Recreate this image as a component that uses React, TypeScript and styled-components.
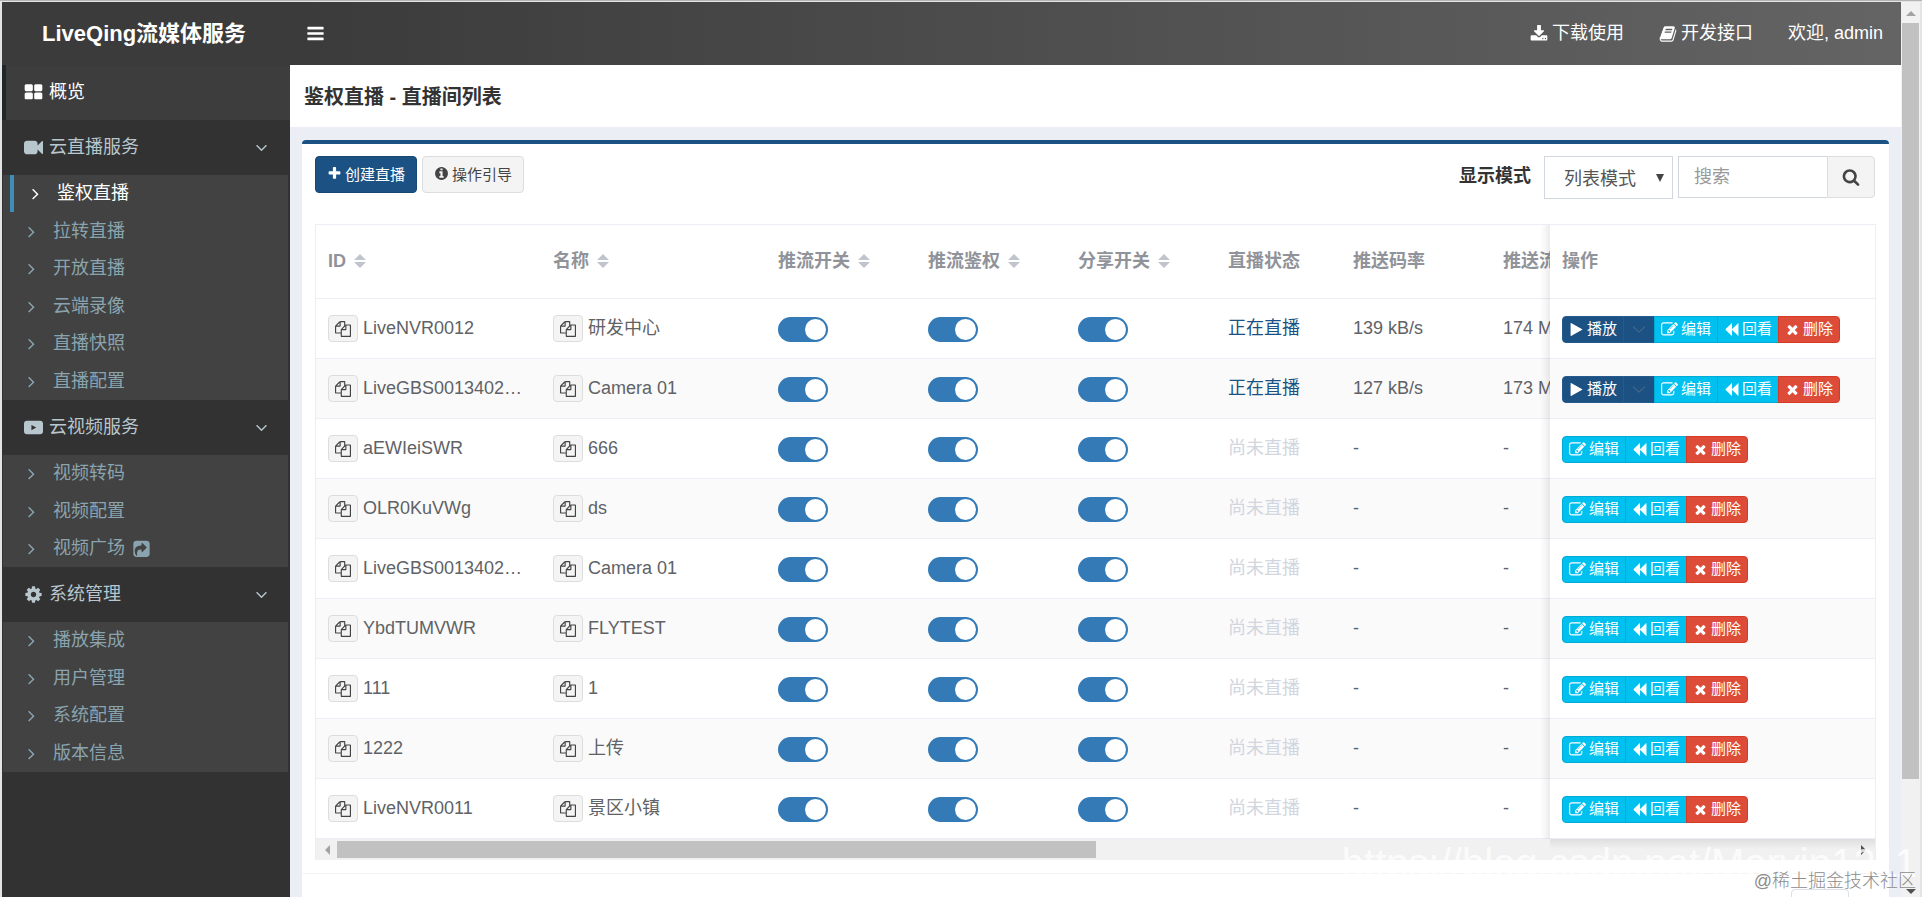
import { useState } from "react"
import { createGlobalStyle, styled } from "styled-components"

const GlobalStyle = createGlobalStyle`
    * {
        box-sizing: border-box;
    }

    html {
        overflow: hidden;
    }

    body {
        margin: 0;
        background: #e4e4e4;
        color: #333;
        font-family: "Liberation Sans", "Noto Sans CJK SC", sans-serif;
        font-size: 18px;
        line-height: 25px;
    }

    button, input, select {
        font-family: inherit;
        margin: 0;
    }

    ul {
        list-style: none;
        margin: 0;
        padding: 0;
    }
`

const icons = {
    grid: "M832 1024v384q0 52-38 90t-90 38h-512q-52 0-90-38t-38-90v-384q0-52 38-90t90-38h512q52 0 90 38t38 90zm0-768v384q0 52-38 90t-90 38h-512q-52 0-90-38t-38-90v-384q0-52 38-90t90-38h512q52 0 90 38t38 90zm896 768v384q0 52-38 90t-90 38h-512q-52 0-90-38t-38-90v-384q0-52 38-90t90-38h512q52 0 90 38t38 90zm0-768v384q0 52-38 90t-90 38h-512q-52 0-90-38t-38-90v-384q0-52 38-90t90-38h512q52 0 90 38t38 90z",
    camera: "M1792 352v1088q0 42-39 59-13 5-25 5-27 0-45-19l-403-403v166q0 119-84.5 203.5t-203.5 84.5h-704q-119 0-203.5-84.5t-84.5-203.5v-704q0-119 84.5-203.5t203.5-84.5h704q119 0 203.5 84.5t84.5 203.5v165l403-402q18-19 45-19 12 0 25 5 39 17 39 59z",
    video: "M288 256h1216q288 0 288 288v704q0 288-288 288h-1216q-288 0-288-288v-704q0-288 288-288zM700 650v500l450-250z",
    cog: "M1152 896q0-106-75-181t-181-75-181 75-75 181 75 181 181 75 181-75 75-181zm512-109v222q0 12-8 23t-20 13l-185 28q-19 54-39 91 35 50 107 138 10 12 10 25t-9 23q-27 37-99 108t-94 71q-12 0-26-9l-138-108q-44 23-91 38-16 136-29 186-7 28-36 28h-222q-14 0-24.5-8.5t-11.5-21.5l-28-184q-49-16-90-37l-141 107q-10 9-25 9-14 0-25-11-126-114-165-168-7-10-7-23 0-12 8-23 15-21 51-66.5t54-70.5q-27-50-41-99l-183-27q-13-2-21-12.5t-8-23.5v-222q0-12 8-23t19-13l186-28q14-46 39-92-40-57-107-138-10-12-10-24 0-10 9-23 26-36 98.5-107.5t94.5-71.5q13 0 26 10l138 107q44-23 91-38 16-136 29-186 7-28 36-28h222q14 0 24.5 8.5t11.5 21.5l28 184q49 16 90 37l142-107q9-9 24-9 13 0 25 10 129 119 165 170 7 8 7 22 0 12-8 23-15 21-51 66.5t-54 70.5q26 50 41 98l183 28q13 2 21 12.5t8 23.5z",
    share: "M1005 1197l352-352q19-19 19-45t-19-45l-352-352q-30-31-69-14-40 17-40 59v160q-119 0-216 19.5t-162.5 51-114 79-76.5 95.5-44.5 109-21.5 111.5-5 110.5q0 181 167 404 10 12 25 12 7 0 13-3 22-9 19-33-44-354 62-473 46-52 130-75.5t224-23.5v160q0 42 40 59 12 5 24 5 26 0 45-19zm659-749v960q0 119-84.5 203.5t-203.5 84.5h-960q-119 0-203.5-84.5t-84.5-203.5v-960q0-119 84.5-203.5t203.5-84.5h960q119 0 203.5 84.5t84.5 203.5z",
    download: "M1344 1344q0-26-19-45t-45-19-45 19-19 45 19 45 45 19 45-19 19-45zm256 0q0-26-19-45t-45-19-45 19-19 45 19 45 45 19 45-19 19-45zm128-224v320q0 40-28 68t-68 28h-1472q-40 0-68-28t-28-68v-320q0-40 28-68t68-28h465l135 136q58 56 136 56t136-56l136-136h464q40 0 68 28t28 68zm-325-569q17 41-14 70l-448 448q-18 19-45 19t-45-19l-448-448q-31-29-14-70 17-39 59-39h256v-448q0-26 19-45t45-19h256q26 0 45 19t19 45v448h256q42 0 59 39z",
    book: "M1703 478q40 57 18 129l-275 906q-19 64-76.5 107.5t-122.5 43.5h-923q-77 0-148.5-53.5t-99.5-131.5q-24-67-2-127 0-4 3-27t4-37q1-8-3-21.5t-3-19.5q2-11 8-21t16.5-23.5 16.5-23.5q23-38 45-91.5t30-91.5q3-10 .5-30t-.5-28q3-11 17-28t17-23q21-36 42-92t25-90q1-9-2.5-32t.5-28q4-13 22-30.5t22-22.5q19-26 42.5-84.5t27.5-96.5q1-8-3-25.5t-2-26.5q2-8 9-18t18-23 17-21q8-12 16.5-30.5t15-35 16-36 19.5-32 26.5-23.5 36-11.5 47.5 5.5l-1 3q38-9 51-9h761q74 0 114 56t18 130l-274 906q-36 119-71.5 153.5t-128.5 34.5h-869q-27 0-38 15-11 16-1 43 24 70 144 70h923q29 0 56-15.5t35-41.5l300-987q7-22 5-57 38 15 59 43zm-1064 2q-4 13 2 22.5t20 9.5h608q13 0 25.5-9.5t16.5-22.5l21-64q4-13-2-22.5t-20-9.5h-608q-13 0-25.5 9.5t-16.5 22.5zm-83 256q-4 13 2 22.5t20 9.5h608q13 0 25.5-9.5t16.5-22.5l21-64q4-13-2-22.5t-20-9.5h-608q-13 0-25.5 9.5t-16.5 22.5z",
    bars: "M1664 1344v128q0 26-19 45t-45 19h-1408q-26 0-45-19t-19-45v-128q0-26 19-45t45-19h1408q26 0 45 19t19 45zm0-512v128q0 26-19 45t-45 19h-1408q-26 0-45-19t-19-45v-128q0-26 19-45t45-19h1408q26 0 45 19t19 45zm0-512v128q0 26-19 45t-45 19h-1408q-26 0-45-19t-19-45v-128q0-26 19-45t45-19h1408q26 0 45 19t19 45z",
    plus: "M1600 736v192q0 40-28 68t-68 28h-416v416q0 40-28 68t-68 28h-192q-40 0-68-28t-28-68v-416h-416q-40 0-68-28t-28-68v-192q0-40 28-68t68-28h416v-416q0-40 28-68t68-28h192q40 0 68 28t28 68v416h416q40 0 68 28t28 68z",
    info: "M1152 1376v-160q0-14-9-23t-23-9h-96v-512q0-14-9-23t-23-9h-320q-14 0-23 9t-9 23v160q0 14 9 23t23 9h96v320h-96q-14 0-23 9t-9 23v160q0 14 9 23t23 9h448q14 0 23-9t9-23zm-128-896v-160q0-14-9-23t-23-9h-192q-14 0-23 9t-9 23v160q0 14 9 23t23 9h192q14 0 23-9t9-23zm640 416q0 209-103 385.5t-279.5 279.5-385.5 103-385.5-103-279.5-279.5-103-385.5 103-385.5 279.5-279.5 385.5-103 385.5 103 279.5 279.5 103 385.5z",
    search: "M1216 832q0-185-131.5-316.5t-316.5-131.5-316.5 131.5-131.5 316.5 131.5 316.5 316.5 131.5 316.5-131.5 131.5-316.5zm512 832q0 52-38 90t-90 38q-54 0-90-38l-343-342q-179 124-399 124-143 0-273.5-55.5t-225-150-150-225-55.5-273.5 55.5-273.5 150-225 225-150 273.5-55.5 273.5 55.5 225 150 150 225 55.5 273.5q0 220-124 399l343 343q37 37 37 90z",
    copy: "M1696 384q40 0 68 28t28 68v1216q0 40-28 68t-68 28h-960q-40 0-68-28t-28-68v-288h-544q-40 0-68-28t-28-68v-672q0-40 20-88t48-76l408-408q28-28 76-48t88-20h416q40 0 68 28t28 68v328q68-40 128-40h416zm-544 213l-299 299h299v-299zm-640-384l-299 299h299v-299zm196 647l316-316v-416h-384v416q0 40-28 68t-68 28h-416v640h512v-256q0-40 20-88t48-76zm956 804v-1152h-384v416q0 40-28 68t-68 28h-416v640h896z",
    edit: "M888 1184l116-116-152-152-116 116v56h96v96h56zm440-720q-16-16-33 1l-350 350q-17 17-1 33t33-1l350-350q17-17 1-33zm80 594v190q0 119-84.5 203.5t-203.5 84.5h-832q-119 0-203.5-84.5t-84.5-203.5v-832q0-119 84.5-203.5t203.5-84.5h832q63 0 117 25 15 7 18 23 3 17-9 29l-49 49q-14 14-32 8-23-6-45-6h-832q-66 0-113 47t-47 113v832q0 66 47 113t113 47h832q66 0 113-47t47-113v-126q0-13 9-22l64-64q15-15 35-7t20 29zm-96-738l288 288-672 672h-288v-288zm444 132l-92 92-288-288 92-92q28-28 68-28t68 28l152 152q28 28 28 68t-28 68z",
    play: "M1576 927l-1328 738q-23 13-39.5 3t-16.5-36v-1472q0-26 16.5-36t39.5 3l1328 738q23 13 23 31t-23 31z",
    backward: "M1683 141q19-19 32-13t13 32v1472q0 26-13 32t-32-13l-710-710q-9-9-13-19v710q0 26-13 32t-32-13l-710-710q-19-19-19-45t19-45l710-710q19-19 32-13t13 32v710q4-10 13-19z",
    times: "M1490 1322q0 40-28 68l-136 136q-28 28-68 28t-68-28l-294-294-294 294q-28 28-68 28t-68-28l-136-136q-28-28-28-68t28-68l294-294-294-294q-28-28-28-68t28-68l136-136q28-28 68-28t68 28l294 294 294-294q28-28 68-28t68 28l136 136q28 28 28 68t-28 68l-294 294 294 294q28 28 28 68z",
    down: "M1395 736q0 13-10 23l-466 466q-10 10-23 10t-23-10l-466-466q-10-10-10-23t10-23l50-50q10-10 23-10t23 10l393 393 393-393q10-10 23-10t23 10l50 50q10 10 10 23z",
    right: "M1171 960q0 13-10 23l-466 466q-10 10-23 10t-23-10l-50-50q-10-10-10-23t10-23l393-393-393-393q-10-10-10-23t10-23l50-50q10-10 23-10t23 10l466 466q10 10 10 23z",
    thinDown: "M100 640l796 740 796-740-80-90-716 670-716-670z",
}

type iconProp = {
    name: keyof typeof icons
    size?: number
}

const Icon = ({ name, size = 18 }: iconProp) => (
    <IconSvg viewBox="0 0 1792 1792" width={size} height={size} aria-hidden="true">
        <path d={icons[name]} fillRule="evenodd" />
    </IconSvg>
)

type menuGroup = {
    title: string
    icon: keyof typeof icons
    items: string[]
}

const menu: menuGroup[] = [
    { title: "云直播服务", icon: "camera", items: ["鉴权直播", "拉转直播", "开放直播", "云端录像", "直播快照", "直播配置"] },
    { title: "云视频服务", icon: "video", items: ["视频转码", "视频配置", "视频广场"] },
    { title: "系统管理", icon: "cog", items: ["播放集成", "用户管理", "系统配置", "版本信息"] },
]

type room = {
    id: string
    name: string
    rate?: string
    total?: string
}

const rooms: room[] = [
    { id: "LiveNVR0012", name: "研发中心", rate: "139 kB/s", total: "174 MB" },
    { id: "LiveGBS0013402000000", name: "Camera 01", rate: "127 kB/s", total: "173 MB" },
    { id: "aEWIeiSWR", name: "666" },
    { id: "OLR0KuVWg", name: "ds" },
    { id: "LiveGBS0013402000001", name: "Camera 01" },
    { id: "YbdTUMVWR", name: "FLYTEST" },
    { id: "111", name: "1" },
    { id: "1222", name: "上传" },
    { id: "LiveNVR0011", name: "景区小镇" },
]

const columns = [
    { title: "ID", width: 225, sort: true },
    { title: "名称", width: 225, sort: true },
    { title: "推流开关", width: 150, sort: true },
    { title: "推流鉴权", width: 150, sort: true },
    { title: "分享开关", width: 150, sort: true },
    { title: "直播状态", width: 125, sort: false },
    { title: "推送码率", width: 150, sort: false },
    { title: "推送流量", width: 150, sort: false },
    { title: "操作", width: 325, sort: false },
]

const switches = ["推流开关", "推流鉴权", "分享开关"]

const Sidebar = () => {
    const [active, setActive] = useState("鉴权直播")

    return (
        <SidebarContainer>
            <OverviewLink href="#overview">
                <Icon name="grid" size={19} />
                概览
            </OverviewLink>
            {menu.map((group) => (
                <div key={group.title}>
                    <GroupLink href="#group">
                        <Icon name={group.icon} size={19} />
                        <span>{group.title}</span>
                        <Icon name="down" size={19} />
                    </GroupLink>
                    <SubMenu>
                        {group.items.map((item) => (
                            <SubItem key={item}>
                                <SubLink href="#item" $active={item === active} onClick={() => setActive(item)}>
                                    <Icon name="right" size={19} />
                                    <span>{item}</span>
                                    {item === "视频广场" && <Icon name="share" size={19} />}
                                </SubLink>
                            </SubItem>
                        ))}
                    </SubMenu>
                </div>
            ))}
        </SidebarContainer>
    )
}

const RoomRow = ({ id, name, rate, total }: room) => (
    <tr>
        {[id, name].map((text, i) => (
            <td key={i}>
                <CopyCell>
                    <CopyButton type="button" aria-label="复制">
                        <Icon name="copy" size={16} />
                    </CopyButton>
                    <span>{text}</span>
                </CopyCell>
            </td>
        ))}
        {switches.map((label) => (
            <td key={label}>
                <Toggle type="checkbox" role="switch" aria-label={label} defaultChecked />
            </td>
        ))}
        <td><Status $live={!!rate}>{rate ? "正在直播" : "尚未直播"}</Status></td>
        <td>{rate || "-"}</td>
        <td>{total || "-"}</td>
        <FixedCell>
            <Actions>
                {rate && (
                    <>
                        <ActionButton type="button" $kind="primary"><Icon name="play" size={15} />播放</ActionButton>
                        <MoreButton type="button" $kind="primary" aria-label="更多"><Icon name="thinDown" size={14} /></MoreButton>
                    </>
                )}
                <ActionButton type="button" $kind="info"><Icon name="edit" size={17} />编辑</ActionButton>
                <ActionButton type="button" $kind="info"><Icon name="backward" size={15} />回看</ActionButton>
                <ActionButton type="button" $kind="danger"><Icon name="times" size={15} />删除</ActionButton>
            </Actions>
        </FixedCell>
    </tr>
)

const App = () => {
    return (
        <Window>
            <GlobalStyle />
            <Page>
                <Header>
                    <Logo href="#home">LiveQing流媒体服务</Logo>
                    <MenuButton type="button" aria-label="菜单"><Icon name="bars" size={19} /></MenuButton>
                    <HeaderNav>
                        <a href="#download"><Icon name="download" />下载使用</a>
                        <a href="#api"><Icon name="book" />开发接口</a>
                        <a href="#user">欢迎, admin</a>
                    </HeaderNav>
                </Header>
                <Body>
                    <Sidebar />
                    <Content>
                        <TitleBar>
                            <h1>鉴权直播 - 直播间列表</h1>
                        </TitleBar>
                        <Box>
                            <Toolbar>
                                <ToolButton type="button" $primary><Icon name="plus" size={15} />创建直播</ToolButton>
                                <ToolButton type="button"><Icon name="info" size={15} />操作引导</ToolButton>
                                <Filters>
                                    <label htmlFor="mode">显示模式</label>
                                    <SelectWrap>
                                        <ModeSelect id="mode">
                                            <option>列表模式</option>
                                            <option>视图模式</option>
                                        </ModeSelect>
                                    </SelectWrap>
                                    <SearchInput type="text" placeholder="搜索" aria-label="搜索" />
                                    <SearchButton type="button" aria-label="查询"><Icon name="search" /></SearchButton>
                                </Filters>
                            </Toolbar>
                            <TableFrame>
                                <TableScroll>
                                    <Table>
                                        <colgroup>
                                            {columns.map((col) => <col key={col.title} width={col.width} />)}
                                        </colgroup>
                                        <thead>
                                            <tr>
                                                {columns.map((col) => (
                                                    <HeadCell key={col.title} $fixed={col.title === "操作"}>
                                                        {col.title}
                                                        {col.sort && (
                                                            <SortIcon viewBox="0 0 12 14" aria-hidden="true">
                                                                <path d="M6 0L12 6H0zM0 8H12L6 14z" />
                                                            </SortIcon>
                                                        )}
                                                    </HeadCell>
                                                ))}
                                            </tr>
                                        </thead>
                                        <tbody>
                                            {rooms.map((item) => <RoomRow key={item.id} {...item} />)}
                                        </tbody>
                                    </Table>
                                </TableScroll>
                                <ScrollBarX>
                                    <Arrow viewBox="0 0 10 10"><path d="M8 0V10L3 5z" /></Arrow>
                                    <TrackX><ThumbX /></TrackX>
                                    <Arrow viewBox="0 0 10 10" $dark><path d="M2 0V10L7 5z" /></Arrow>
                                </ScrollBarX>
                            </TableFrame>
                            <BoxFooter>
                                <PageSize type="button" aria-label="分页" />
                            </BoxFooter>
                        </Box>
                    </Content>
                </Body>
            </Page>
            <ScrollBarY>
                <Arrow viewBox="0 0 10 10"><path d="M0 8H10L5 3z" /></Arrow>
                <TrackY><ThumbY /></TrackY>
                <Arrow viewBox="0 0 10 10" $dark><path d="M0 2H10L5 7z" /></Arrow>
            </ScrollBarY>
            <BlogMark>https://blog.csdn.net/Mervin1211</BlogMark>
            <SiteMark>@稀土掘金技术社区</SiteMark>
        </Window>
    )
}

const IconSvg = styled.svg`
    fill: currentColor;
    flex: none;
    display: block;
`

const Window = styled.div`
    position: relative;
    display: flex;
    height: 100vh;
    overflow: hidden;
    padding: 1px 2px 0;
    border-top: 1px solid #b4b4b4;
`

const Page = styled.div`
    display: flex;
    flex-direction: column;
    flex: 1;
    min-width: 0;
`

const Header = styled.header`
    display: flex;
    align-items: center;
    flex: none;
    height: 63px;
    background: linear-gradient(90deg, #3b3b3b 16%, #646464);
    color: #fff;
`

const Logo = styled.a`
    width: 288px;
    padding-left: 40px;
    color: #fff;
    font-size: 22px;
    font-weight: bold;
    line-height: 30px;
    text-decoration: none;
`

const MenuButton = styled.button`
    padding: 16px;
    border: 0;
    background: none;
    color: #fff;
`

const HeaderNav = styled.nav`
    display: flex;
    gap: 35px;
    margin-left: auto;
    padding-right: 18px;

    a {
        display: flex;
        align-items: center;
        gap: 4px;
        color: #fff;
        text-decoration: none;
    }
`

const Body = styled.div`
    display: flex;
    flex: 1;
    min-height: 0;
`

const SidebarContainer = styled.aside`
    width: 288px;
    flex: none;
    background: #323232;
`

const OverviewLink = styled.a`
    display: flex;
    align-items: center;
    gap: 6px;
    height: 55px;
    padding-left: 18px;
    border-left: 4px solid #1e282c;
    background: #3d3d3d;
    color: #fff;
    text-decoration: none;
`

const GroupLink = styled.a`
    display: flex;
    align-items: center;
    gap: 6px;
    height: 55px;
    padding: 0 19px 0 22px;
    color: #b8c7ce;
    text-decoration: none;

    span {
        flex: 1;
    }
`

const SubMenu = styled.ul`
    margin: 0 2px 0 1px;
    padding-left: 7px;
    background: #424242;
`

const SubItem = styled.li`
    height: 37px;

    &:nth-child(even) {
        height: 38px;
    }
`

const SubLink = styled.a<{ $active: boolean }>`
    display: flex;
    align-items: center;
    height: 100%;
    padding-left: 12px;
    border-left: ${({ $active }) => ($active ? "4px solid #3c8dbc" : "0")};
    color: ${({ $active }) => ($active ? "#fff" : "#8aa4af")};
    text-decoration: none;

    span {
        margin: 0 7px 0 12px;
    }
`

const Content = styled.main`
    display: flex;
    flex-direction: column;
    flex: 1;
    min-width: 0;
    background: #ebeef4;
`

const TitleBar = styled.div`
    flex: none;
    padding: 19px 14px 17px;
    background: #fff;

    h1 {
        margin: 0;
        font-size: 20px;
        line-height: 26px;
    }
`

const Box = styled.section`
    flex: none;
    margin: 13px 12px 0;
    border-top: 4px solid #1b5283;
    border-radius: 4px;
    background: #fff;
    box-shadow: 0 1px 1px rgba(0, 0, 0, 0.1);
`

const Toolbar = styled.div`
    display: flex;
    align-items: flex-start;
    gap: 5px;
    padding: 12px 14px 25px 13px;
`

const ToolButton = styled.button<{ $primary?: boolean }>`
    display: flex;
    align-items: center;
    gap: 3px;
    height: 37px;
    padding: 0 11px 2px;
    border: 1px solid ${({ $primary }) => ($primary ? "#18476f" : "#ddd")};
    border-radius: 4px;
    background: ${({ $primary }) => ($primary ? "#1b5283" : "#f4f4f4")};
    color: ${({ $primary }) => ($primary ? "#fff" : "#444")};
    font-size: 15px;
`

const Filters = styled.div`
    display: flex;
    align-items: flex-start;
    margin-left: auto;

    label {
        padding: 8px 13px 0 0;
        font-weight: bold;
    }
`

const SelectWrap = styled.div`
    position: relative;
    margin-right: 5px;

    &::after {
        content: "";
        position: absolute;
        right: 9px;
        top: 18px;
        border: 4px solid transparent;
        border-top: 8px solid #444;
        border-bottom: 0;
        pointer-events: none;
    }
`

const ModeSelect = styled.select`
    appearance: none;
    width: 129px;
    height: 43px;
    padding: 2px 0 0 19px;
    border: 1px solid #d2d6de;
    border-radius: 0;
    background: #fff;
    color: #555;
    font-size: 18px;
`

const SearchInput = styled.input`
    width: 149px;
    height: 42px;
    padding: 0 15px;
    border: 1px solid #d2d6de;
    border-right: 0;
    font-size: 18px;

    &::placeholder {
        color: #999;
    }
`

const SearchButton = styled.button`
    display: flex;
    align-items: center;
    justify-content: center;
    width: 48px;
    height: 42px;
    padding: 0;
    border: 1px solid #ddd;
    border-radius: 0 4px 4px 0;
    background: #f4f4f4;
    color: #444;
`

const TableFrame = styled.div`
    margin: 0 13px;
    border: 1px solid #ebeef5;
    border-bottom: 0;
    color: #606266;
`

const TableScroll = styled.div`
    overflow: hidden;
`

const Table = styled.table`
    width: 1650px;
    min-width: 100%;
    table-layout: fixed;
    border-spacing: 0;

    td, th {
        padding: 0 12px;
        border-bottom: 1px solid #ebeef5;
        background: #fff;
        text-align: left;
        white-space: nowrap;
    }

    td {
        height: 60px;
    }

    tr:nth-child(even) td {
        background: #fafafa;
    }
`

const fixedStyle = `
    position: sticky;
    right: 0;
    z-index: 1;

    &::before {
        content: "";
        position: absolute;
        left: -10px;
        top: 0;
        bottom: -1px;
        width: 10px;
        background: linear-gradient(90deg, transparent, rgba(0, 0, 0, 0.03) 50%, rgba(0, 0, 0, 0.08));
    }
`

const HeadCell = styled.th<{ $fixed: boolean }>`
    height: 74px;
    color: #909399;
    ${({ $fixed }) => $fixed && fixedStyle}
`

const FixedCell = styled.td`
    ${fixedStyle}
`

const SortIcon = styled.svg`
    width: 12px;
    height: 14px;
    margin-left: 8px;
    vertical-align: -1px;
    fill: #c0c4cc;
`

const CopyCell = styled.div`
    display: flex;
    align-items: center;
    gap: 5px;

    span {
        max-width: 162px;
        overflow: hidden;
        text-overflow: ellipsis;
    }
`

const CopyButton = styled.button`
    display: flex;
    align-items: center;
    justify-content: center;
    flex: none;
    width: 30px;
    height: 27px;
    padding: 0;
    border: 1px solid #ddd;
    border-radius: 4px;
    background: #f4f4f4;
    color: #444;
`

const Toggle = styled.input`
    appearance: none;
    display: block;
    width: 50px;
    height: 25px;
    margin: 1px 0 0;
    padding: 2px;
    border-radius: 13px;
    background: #ccc;

    &::before {
        content: "";
        display: block;
        width: 21px;
        height: 21px;
        border-radius: 50%;
        background: #fff;
    }

    &:checked {
        background: #337ab7;
    }

    &:checked::before {
        margin-left: auto;
    }
`

const Status = styled.span<{ $live: boolean }>`
    color: ${({ $live }) => ($live ? "#1b5283" : "#d2d6de")};
`

const Actions = styled.div`
    display: flex;
    padding-top: 1px;

    button:first-child {
        border-radius: 4px 0 0 4px;
    }

    button:last-child {
        border-radius: 0 4px 4px 0;
    }

    button + button {
        margin-left: -1px;
    }
`

const kinds = {
    primary: { back: "#1b5283", edge: "#265a8c" },
    info: { back: "#00c0ef", edge: "#00acd6" },
    danger: { back: "#dd4b39", edge: "#d73925" },
}

const ActionButton = styled.button<{ $kind: keyof typeof kinds }>`
    display: flex;
    align-items: center;
    gap: 3px;
    height: 27px;
    padding: 0 6px;
    border: 1px solid ${({ $kind }) => kinds[$kind].edge};
    background: ${({ $kind }) => kinds[$kind].back};
    color: #fff;
    font-size: 15px;
    line-height: 22px;
`

const MoreButton = styled(ActionButton)`
    padding: 0 8px;
    color: #4d6a86;
`

const ScrollBarX = styled.div`
    position: relative;
    display: flex;
    align-items: center;
    height: 21px;
    padding: 0 6px;
    background: #f1f1f1;

    &::after {
        content: "";
        position: absolute;
        top: 0;
        right: 0;
        width: 325px;
        height: 10px;
        background: linear-gradient(rgba(0, 0, 0, 0.08), transparent);
    }
`

const TrackX = styled.div`
    flex: 1;
    margin: 0 5px;
`

const ThumbX = styled.div`
    width: 50%;
    height: 17px;
    background: #c1c1c1;
`

const Arrow = styled.svg<{ $dark?: boolean }>`
    width: 10px;
    height: 10px;
    flex: none;
    fill: ${({ $dark }) => ($dark ? "#505050" : "#a3a3a3")};
`

const BoxFooter = styled.div`
    display: flex;
    justify-content: flex-end;
    margin-top: 13px;
    padding: 15px 40px 15px;
    border-top: 1px solid #f4f4f4;
`

const PageSize = styled.button`
    width: 58px;
    height: 35px;
    border: 1px solid #dcdfe6;
    border-radius: 4px;
    background: #fff;
`

const ScrollBarY = styled.div`
    display: flex;
    flex-direction: column;
    align-items: center;
    width: 19px;
    padding: 6px 0 0;
    background: #f1f1f1;
`

const TrackY = styled.div`
    flex: 1;
    width: 17px;
    padding: 5px 0;
`

const ThumbY = styled.div`
    height: 88%;
    background: #c1c1c1;
`

const BlogMark = styled.div`
    position: absolute;
    right: 5px;
    bottom: 12px;
    color: rgba(255, 255, 255, 0.8);
    font-size: 40px;
    line-height: 44px;
    pointer-events: none;
`

const SiteMark = styled.div`
    position: absolute;
    right: 6px;
    bottom: 2px;
    color: #8c8c8c;
    font-weight: 300;
    line-height: 28px;
    text-shadow: 0 0 2px #fff;
    pointer-events: none;
`

export default App
